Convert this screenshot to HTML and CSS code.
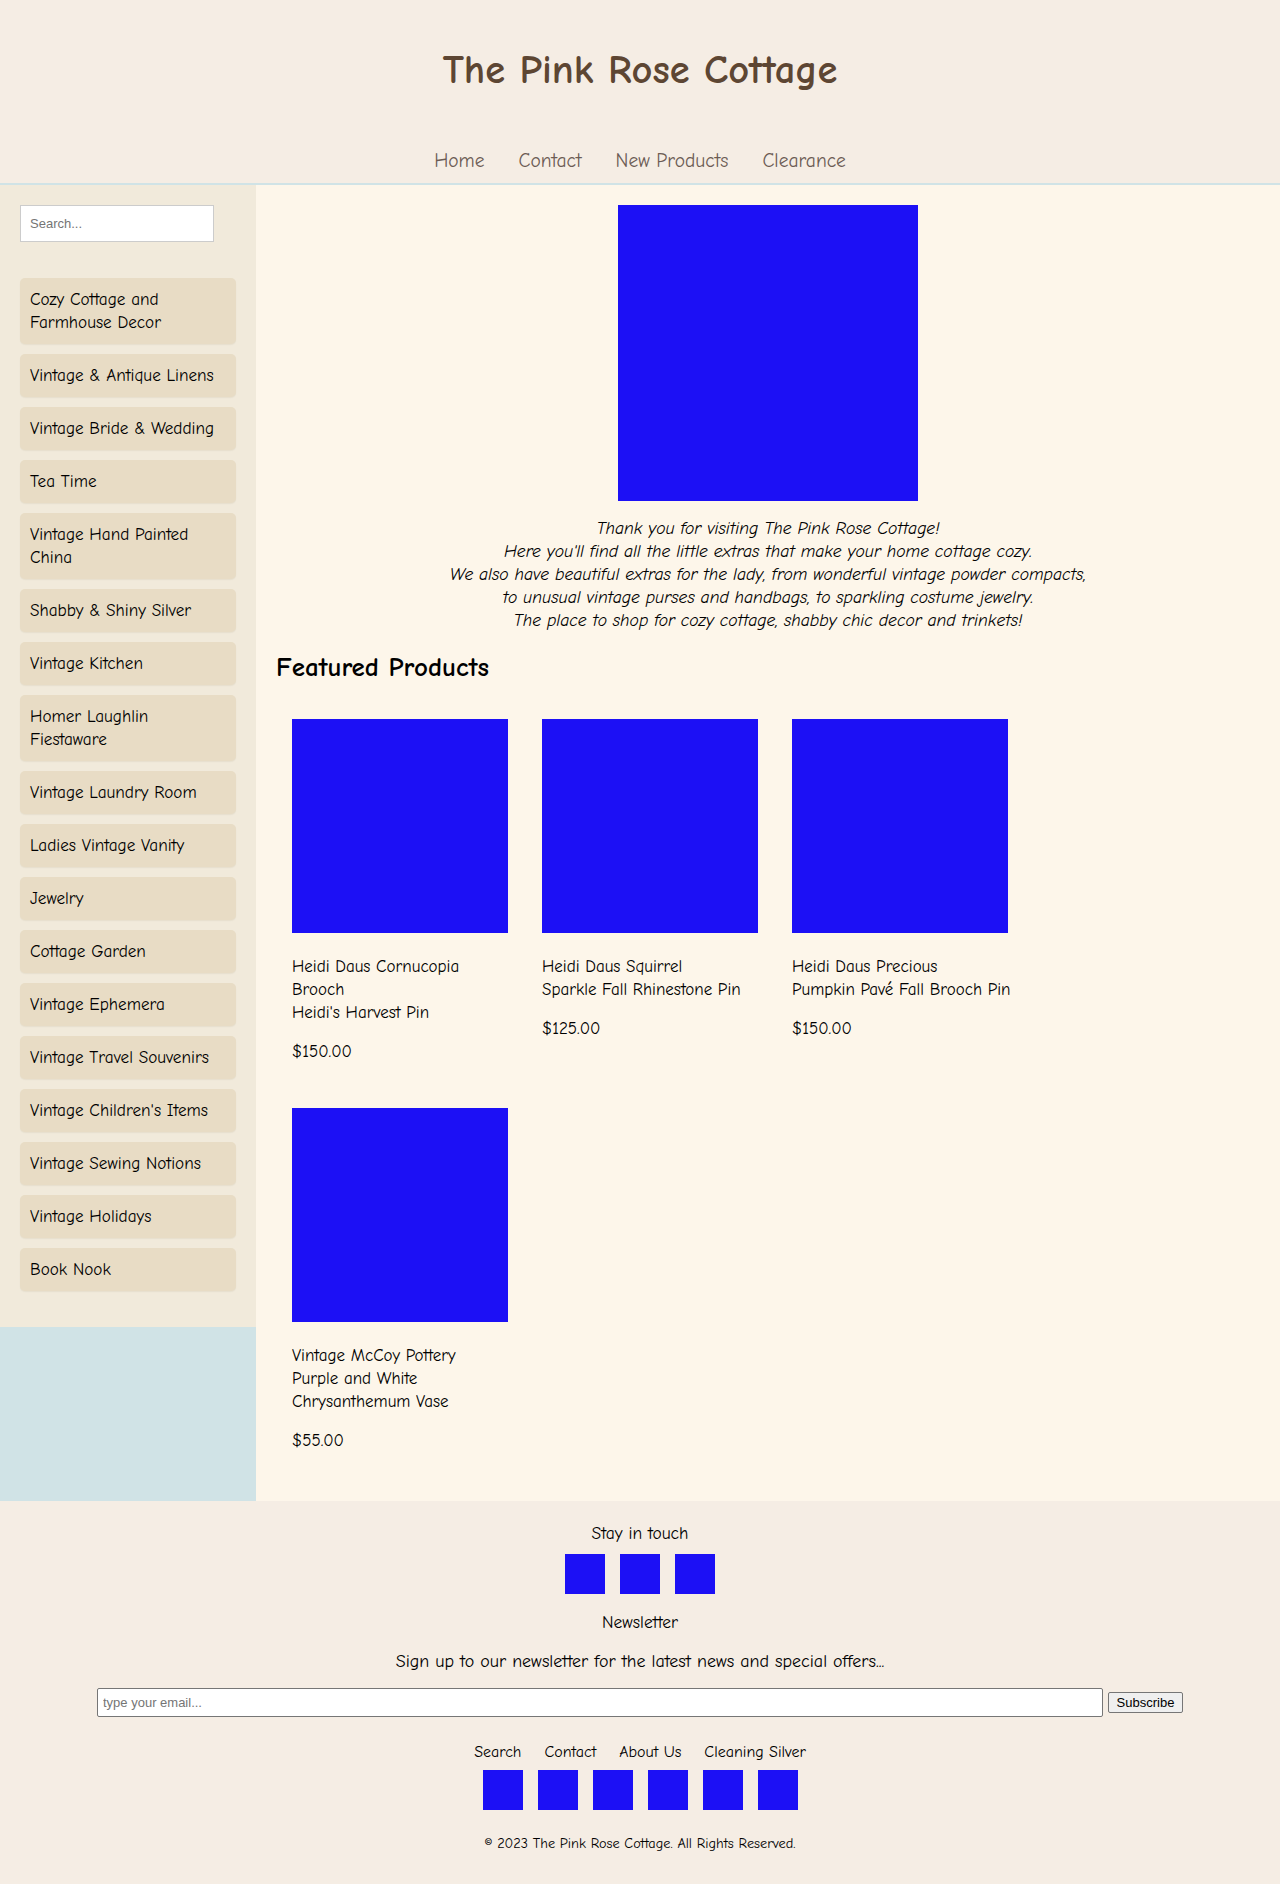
FILE: index.html
```html
<!DOCTYPE html>
<html lang="en">
<head>
<meta charset="utf-8">
<title>The Pink Rose Cottage</title>
<link rel="stylesheet" href="styles.css">
</head>
<body>
<header class="site-header">
  <h1 class="site-title">The Pink Rose Cottage</h1>
  <nav class="main-nav">
    <a href="#">Home</a>
    <a href="#">Contact</a>
    <a href="#">New Products</a>
    <a href="#">Clearance</a>
  </nav>
</header>

<div class="layout">
  <aside class="sidebar">
    <input class="search-input" type="text" placeholder="Search...">
    <ul class="cat-list">
      <li class="cat-item">Cozy Cottage and Farmhouse Decor</li>
      <li class="cat-item">Vintage &amp; Antique Linens</li>
      <li class="cat-item">Vintage Bride &amp; Wedding</li>
      <li class="cat-item">Tea Time</li>
      <li class="cat-item">Vintage Hand Painted China</li>
      <li class="cat-item">Shabby &amp; Shiny Silver</li>
      <li class="cat-item">Vintage Kitchen</li>
      <li class="cat-item">Homer Laughlin Fiestaware</li>
      <li class="cat-item">Vintage Laundry Room</li>
      <li class="cat-item">Ladies Vintage Vanity</li>
      <li class="cat-item">Jewelry</li>
      <li class="cat-item">Cottage Garden</li>
      <li class="cat-item">Vintage Ephemera</li>
      <li class="cat-item">Vintage Travel Souvenirs</li>
      <li class="cat-item">Vintage Children's Items</li>
      <li class="cat-item">Vintage Sewing Notions</li>
      <li class="cat-item">Vintage Holidays</li>
      <li class="cat-item">Book Nook</li>
    </ul>
  </aside>

  <main class="content">
    <div class="hero"></div>
    <p class="intro">
      Thank you for visiting The Pink Rose Cottage!<br>
      Here you'll find all the little extras that make your home cottage cozy.<br>
      We also have beautiful extras for the lady, from wonderful vintage powder compacts,<br>
      to unusual vintage purses and handbags, to sparkling costume jewelry.<br>
      The place to shop for cozy cottage, shabby chic decor and trinkets!
    </p>
    <h2 class="section-title">Featured Products</h2>
    <div class="products">
      <div class="card">
        <div class="card-img"></div>
        <p class="card-title">Heidi Daus Cornucopia Brooch<br>Heidi's Harvest Pin</p>
        <p class="card-price">$150.00</p>
      </div>
      <div class="card">
        <div class="card-img"></div>
        <p class="card-title">Heidi Daus Squirrel<br>Sparkle Fall Rhinestone Pin</p>
        <p class="card-price">$125.00</p>
      </div>
      <div class="card">
        <div class="card-img"></div>
        <p class="card-title">Heidi Daus Precious<br>Pumpkin Pavé Fall Brooch Pin</p>
        <p class="card-price">$150.00</p>
      </div>
      <div class="card">
        <div class="card-img"></div>
        <p class="card-title">Vintage McCoy Pottery<br>Purple and White<br>Chrysanthemum Vase</p>
        <p class="card-price">$55.00</p>
      </div>
    </div>
  </main>
</div>

<footer class="site-footer">
  <p class="footer-heading">Stay in touch</p>
  <div class="icon-row">
    <span class="icon-box"></span>
    <span class="icon-box"></span>
    <span class="icon-box"></span>
  </div>
  <p class="footer-heading newsletter-title">Newsletter</p>
  <p class="newsletter-text">Sign up to our newsletter for the latest news and special offers...</p>
  <form class="newsletter-form">
    <input class="email-input" type="email" placeholder="type your email...">
    <button class="subscribe-btn" type="button">Subscribe</button>
  </form>
  <nav class="footer-links">
    <a href="#">Search</a>
    <a href="#">Contact</a>
    <a href="#">About Us</a>
    <a href="#">Cleaning Silver</a>
  </nav>
  <div class="icon-row icon-row-bottom">
    <span class="icon-box"></span>
    <span class="icon-box"></span>
    <span class="icon-box"></span>
    <span class="icon-box"></span>
    <span class="icon-box"></span>
    <span class="icon-box"></span>
  </div>
  <p class="copyright">© 2023 The Pink Rose Cottage. All Rights Reserved.</p>
</footer>
</body>
</html>
```

FILE: styles.css
```css
* {
  box-sizing: border-box;
}

body {
  margin: 0;
  font-family: "Comic Sans MS", "Comic Neue", "Open Sans", sans-serif;
  font-size: 17.2px;
  line-height: 23px;
  color: #000;
  background: #f5ede4;
}

/* Header */
.site-header {
  background: #f5ede4;
  border-bottom: 2px solid #d0e3e6;
  padding: 46px 0 10px;
  text-align: center;
}

.site-title {
  margin: 0 0 55px;
  font-size: 40.5px;
  line-height: 48px;
  font-weight: 700;
  color: #5d4633;
}

.main-nav {
  display: flex;
  justify-content: center;
  gap: 34px;
  font-size: 19.5px;
  line-height: 24px;
}

.main-nav a {
  color: #6c5c54;
  text-decoration: none;
}

/* Layout */
.layout {
  display: flex;
  align-items: stretch;
  background: #d0e3e6;
}

.sidebar {
  width: 256px;
  flex: 0 0 256px;
  align-self: flex-start;
  background: #f1eadb;
  padding: 20px;
}

.search-input {
  display: block;
  width: 194px;
  height: 37px;
  border: 1px solid #cccccc;
  background: #fff;
  padding: 0 9px;
  font-family: "Liberation Sans", Arial, sans-serif;
  font-size: 13px;
  color: #333;
  outline: none;
}

.search-input::placeholder {
  color: #757575;
}

.cat-list {
  list-style: none;
  margin: 36px 0 16px;
  padding: 0;
  display: flex;
  flex-direction: column;
  gap: 10px;
}

.cat-item {
  background: #e8dcc5;
  border-radius: 5px;
  padding: 10px;
  box-shadow: 0 1px 1px rgba(120, 100, 60, 0.08);
}

/* Main content */
.content {
  flex: 1;
  background: #fdf6ea;
  padding: 20px;
}

.hero {
  width: 300px;
  height: 296px;
  margin: 0 auto;
  background: #1c10f5;
}

.intro {
  margin: 16px 0 0;
  text-align: center;
  font-style: italic;
  font-size: 17.6px;
}

.section-title {
  margin: 20px 0 19px;
  font-size: 27px;
  line-height: 32px;
  font-weight: 700;
}

.products {
  display: flex;
  flex-wrap: wrap;
}

.card {
  width: 250px;
  padding: 16px 12px 16px 16px;
  font-size: 17px;
}

.card-img {
  width: 216px;
  height: 214px;
  background: #1c10f5;
}

.card-title {
  margin: 22px 0 16px;
}

.card-price {
  margin: 0 0 13px;
}

/* Footer */
.site-footer {
  background: #f5ede4;
  text-align: center;
  padding: 21px 0 29px;
  font-size: 17.5px;
}

.footer-heading {
  margin: 0;
}

.icon-row {
  display: flex;
  justify-content: center;
  gap: 15px;
  margin-top: 9px;
}

.icon-box {
  display: block;
  width: 40px;
  height: 40px;
  background: #1c10f5;
}

.newsletter-title {
  margin-top: 17px;
}

.newsletter-text {
  margin: 16px 0 0;
  font-size: 18px;
}

.newsletter-form {
  display: flex;
  justify-content: center;
  align-items: center;
  gap: 5px;
  margin-top: 15px;
}

.email-input {
  width: 1006px;
  height: 29px;
  border: 1px solid #767676;
  border-radius: 2px;
  padding: 0 5px;
  background: #fff;
  font-family: "Liberation Sans", Arial, sans-serif;
  font-size: 13px;
}

.email-input::placeholder {
  color: #757575;
}

.subscribe-btn {
  width: 75px;
  height: 21px;
  padding: 0 6px;
  border: 1px solid #767676;
  border-radius: 2px;
  background: #efefef;
  font-family: "Liberation Sans", Arial, sans-serif;
  font-size: 13px;
  color: #000;
}

.footer-links {
  display: flex;
  justify-content: center;
  gap: 23px;
  margin-top: 24px;
  font-size: 16px;
}

.footer-links a {
  color: #000;
  text-decoration: none;
}

.icon-row-bottom {
  margin-top: 6px;
}

.copyright {
  margin: 25px 0 0;
  font-size: 14.3px;
  line-height: 18px;
}
```
